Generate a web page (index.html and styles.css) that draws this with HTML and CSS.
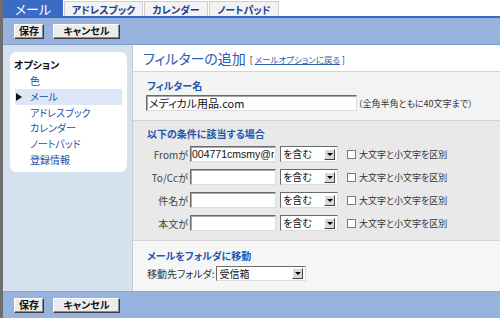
FILE: index.html
```html
<!DOCTYPE html>
<html lang="ja">
<head>
    <meta charset="UTF-8">
    <title>フィルターの追加</title>
    <link rel="stylesheet" href="styles.css">
</head>
<body>
    <div class="frame">
        <div class="tabs">
            <a class="tab active">メール</a>
            <a class="tab t-addr">アドレスブック</a>
            <a class="tab t-cal">カレンダー</a>
            <a class="tab t-note">ノートパッド</a>
        </div>

        <div class="toolbar">
            <button class="btn btn-save">保存</button>
            <button class="btn btn-cancel">キャンセル</button>
        </div>

        <div class="content">
            <div class="sidebar">
                <div class="menu">
                    <div class="menu-title">オプション</div>
                    <ul>
                        <li>色</li>
                        <li class="current">メール</li>
                        <li>アドレスブック</li>
                        <li>カレンダー</li>
                        <li>ノートパッド</li>
                        <li>登録情報</li>
                    </ul>
                </div>
            </div>

            <div class="main">
                <div class="page-head">
                    <span class="page-title">フィルターの追加</span>
                    <span class="back">[ <a href="#">メールオプションに戻る</a> ]</span>
                </div>

                <div class="section s-name">
                    <h3>フィルター名</h3>
                    <div class="name-row">
                        <input class="text name-input" type="text" value="メディカル用品.com">
                        <span class="note">（全角半角ともに40文字まで）</span>
                    </div>
                </div>

                <div class="section s-cond">
                    <h3>以下の条件に該当する場合</h3>
                    <div class="cond-row">
                        <label class="cond-label">Fromが</label>
                        <input class="text cond-input" type="text" value="004771cmsmy@medical.com">
                        <span class="select sel-cond"><span class="sel-text">を含む</span><span class="sel-arrow"></span></span>
                        <span class="check"></span>
                        <span class="check-label">大文字と小文字を区別</span>
                    </div>
                    <div class="cond-row">
                        <label class="cond-label">To/Ccが</label>
                        <input class="text cond-input" type="text" value="">
                        <span class="select sel-cond"><span class="sel-text">を含む</span><span class="sel-arrow"></span></span>
                        <span class="check"></span>
                        <span class="check-label">大文字と小文字を区別</span>
                    </div>
                    <div class="cond-row">
                        <label class="cond-label">件名が</label>
                        <input class="text cond-input" type="text" value="">
                        <span class="select sel-cond"><span class="sel-text">を含む</span><span class="sel-arrow"></span></span>
                        <span class="check"></span>
                        <span class="check-label">大文字と小文字を区別</span>
                    </div>
                    <div class="cond-row">
                        <label class="cond-label">本文が</label>
                        <input class="text cond-input" type="text" value="">
                        <span class="select sel-cond"><span class="sel-text">を含む</span><span class="sel-arrow"></span></span>
                        <span class="check"></span>
                        <span class="check-label">大文字と小文字を区別</span>
                    </div>
                </div>

                <div class="section s-move">
                    <h3>メールをフォルダに移動</h3>
                    <div class="move-row">
                        <label>移動先フォルダ:</label>
                        <span class="select sel-folder"><span class="sel-text">受信箱</span><span class="sel-arrow"></span></span>
                    </div>
                </div>
            </div>
        </div>

        <div class="toolbar bottom">
            <button class="btn btn-save">保存</button>
            <button class="btn btn-cancel">キャンセル</button>
        </div>
    </div>
</body>
</html>
```

FILE: styles.css
```css
html, body {
    margin: 0;
    padding: 0;
    overflow: hidden;
}
body {
    font-family: "Noto Sans CJK JP", "Liberation Sans", sans-serif;
    font-feature-settings: "palt";
    font-size: 10px;
    color: #222;
    background: #fff;
}
.frame {
    width: 497px;
    height: 318px;
    border-left: 3px solid #6e6e6e;
    display: flex;
    flex-direction: column;
}

/* tabs */
.tabs {
    display: flex;
    height: 16px;
    border-bottom: 2px solid #3a69c2;
}
.tab {
    display: flex;
    align-items: center;
    justify-content: center;
    height: 15px;
    margin-top: 1px;
    margin-right: 1px;
    background: #f2f2f2;
    border: 1px solid #cfcfcf;
    border-bottom: none;
    color: #1b3e8c;
    font-weight: bold;
    font-size: 10px;
    box-sizing: border-box;
}
.tab.active {
    height: 16px;
    margin-top: 0;
    width: 60px;
    background: #3a6cc5;
    border-color: #3a6cc5;
    color: #fff;
    font-weight: normal;
    font-size: 13px;
}
.t-addr { width: 79px; }
.t-cal { width: 64px; }
.t-note { width: 70px; }

/* toolbars */
.toolbar {
    height: 26px;
    background: #95b3dd;
    border-bottom: 1px solid #819ecb;
    display: flex;
    align-items: center;
    padding-left: 11px;
    gap: 9px;
}
.toolbar.bottom {
    height: 26px;
    border-bottom: none;
    border-top: 1px solid #8aa7d3;
}
.btn {
    font-family: inherit;
    font-feature-settings: "palt";
    font-size: 10px;
    font-weight: bold;
    color: #111;
    background: #ececec;
    border: 1px solid;
    border-color: #fff #3a3a3a #3a3a3a #fff;
    box-shadow: inset -1px -1px #8c8c8c;
    height: 15px;
    padding: 0;
    line-height: 12px;
}
.btn-save { width: 30px; }
.btn-cancel { width: 67px; }

/* content */
.content {
    flex: 1;
    display: flex;
    min-height: 0;
}
.sidebar {
    width: 130px;
    background: #d6e1f0;
    padding: 7px 0 0 7px;
    box-sizing: border-box;
    border-right: 1px solid #c4cbd6;
}
.menu {
    width: 117px;
    height: 120px;
    background: #fff;
    border-radius: 6px;
    padding: 7px 5px 0 5px;
    box-sizing: border-box;
}
.menu-title {
    font-weight: bold;
    line-height: 12px;
    margin-left: -1px;
    color: #111;
}
.menu ul {
    list-style: none;
    margin: 2px 0 0 0;
    padding: 0;
}
.menu li {
    line-height: 15.8px;
    padding-left: 15px;
    color: #2450a6;
    position: relative;
}
.menu li.current {
    background: #dce6f6;
}
.menu li.current::before {
    content: "";
    position: absolute;
    left: 1px;
    top: 4px;
    border-left: 6px solid #111;
    border-top: 4px solid transparent;
    border-bottom: 4px solid transparent;
}

.main {
    flex: 1;
    display: flex;
    flex-direction: column;
}
.page-head {
    height: 26px;
    background: #fff;
    border-bottom: 1px solid #d4d4d4;
    display: flex;
    align-items: center;
    padding-left: 10px;
    gap: 4px;
}
.page-title {
    font-size: 14px;
    color: #2b5db4;
}
.back {
    font-size: 8.5px;
    color: #222;
    margin-top: 2px;
}
.back a {
    color: #2b5db4;
}

.section {
    padding-left: 14px;
    border-bottom: 1px solid #d4d4d4;
    box-sizing: border-box;
}
.section h3 {
    margin: 0;
    font-size: 10px;
    font-weight: bold;
    color: #2356ad;
    line-height: 12px;
}
.s-name {
    height: 49px;
    background: #f3f3f3;
    padding-top: 8px;
}
.name-row {
    display: flex;
    align-items: center;
    margin-top: 3px;
    margin-left: -1px;
}
.text {
    box-sizing: border-box;
    height: 16px;
    border: 1px solid;
    border-color: #6a6a6a #dcdcdc #dcdcdc #6a6a6a;
    box-shadow: inset 1px 1px #a8a8a8;
    background: #fff;
    padding: 0 2px;
    margin: 0;
    font-family: "Liberation Sans", "Noto Sans CJK JP", sans-serif;
    color: #111;
    outline: none;
}
.name-input {
    width: 211px;
    font-family: "Noto Sans CJK JP", sans-serif;
    font-feature-settings: "palt";
    font-size: 11px;
}
.note {
    font-size: 9px;
    margin-left: 1px;
    color: #333;
}

.s-cond {
    height: 120px;
    background: #e9e9e9;
    padding-top: 7px;
}
.cond-row {
    display: flex;
    align-items: center;
    height: 16px;
    margin-top: 7px;
}
.s-cond h3 + .cond-row {
    margin-top: 6px;
}
.cond-label {
    width: 41px;
    text-align: right;
    color: #444;
    margin-right: 2px;
}
.cond-input {
    width: 86px;
    font-size: 10.5px;
    padding: 0 1px;
}
.select {
    display: flex;
    align-items: center;
    box-sizing: border-box;
    height: 16px;
    background: #fff;
    border: 1px solid;
    border-color: #6a6a6a #dcdcdc #dcdcdc #6a6a6a;
}
.sel-cond {
    width: 58px;
    margin-left: 4px;
}
.sel-text {
    flex: 1;
    padding-left: 2px;
    color: #111;
    line-height: 12px;
}
.sel-arrow {
    width: 11px;
    height: 11px;
    margin-right: 2px;
    background: #d8d8d8;
    border: 1px solid;
    border-color: #fff #444 #444 #fff;
    box-sizing: border-box;
    position: relative;
}
.sel-arrow::after {
    content: "";
    position: absolute;
    left: 2px;
    top: 3px;
    border-top: 3px solid #000;
    border-left: 3px solid transparent;
    border-right: 3px solid transparent;
}
.check {
    width: 9px;
    height: 9px;
    box-sizing: border-box;
    border: 1px solid #7a7a7a;
    background: #fff;
    margin-left: 9px;
    margin-right: 3px;
}
.check-label {
    font-size: 9px;
    color: #333;
}

.s-move {
    flex: 1;
    background: #f6f6f6;
    padding-top: 9px;
    border-bottom: none;
}
.move-row {
    display: flex;
    align-items: center;
    margin-top: 4px;
    color: #333;
}
.sel-folder {
    width: 90px;
    height: 15px;
    margin-left: 2px;
}
```
